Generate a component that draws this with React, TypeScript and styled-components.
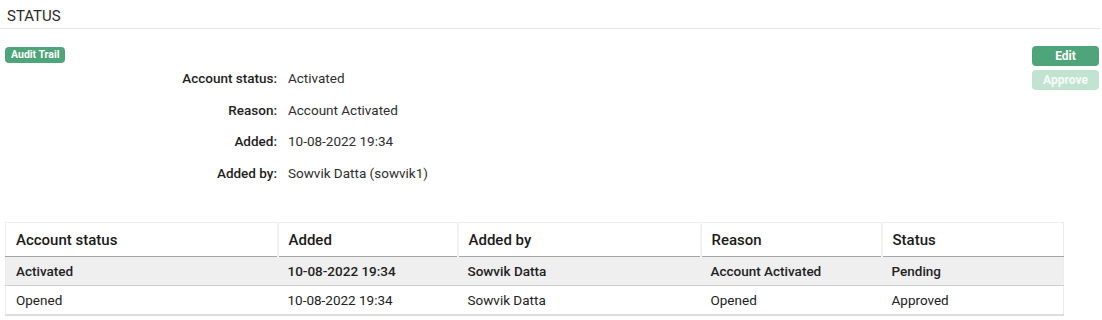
import React from "react";
import styled, { createGlobalStyle } from "styled-components";

interface Entry {
  accountStatus: string;
  added: string;
  addedBy: string;
  reason: string;
  status: string;
  pending?: boolean;
}

const entries: Entry[] = [
  {
    accountStatus: "Activated",
    added: "10-08-2022 19:34",
    addedBy: "Sowvik Datta",
    reason: "Account Activated",
    status: "Pending",
    pending: true,
  },
  {
    accountStatus: "Opened",
    added: "10-08-2022 19:34",
    addedBy: "Sowvik Datta",
    reason: "Opened",
    status: "Approved",
  },
];

const details = [
  { label: "Account status:", value: "Activated" },
  { label: "Reason:", value: "Account Activated" },
  { label: "Added:", value: "10-08-2022 19:34" },
  { label: "Added by:", value: "Sowvik Datta (sowvik1)" },
];

const App: React.FC = () => {
  return (
    <Page>
      <GlobalStyle />
      <Heading>Status</Heading>
      <Body>
        <Main>
          <Badge>Audit Trail</Badge>
          <Details>
            {details.map((d) => (
              <React.Fragment key={d.label}>
                <Label>{d.label}</Label>
                <Value>{d.value}</Value>
              </React.Fragment>
            ))}
          </Details>
        </Main>
        <Actions>
          <ActionButton>Edit</ActionButton>
          <ActionButton disabled>Approve</ActionButton>
        </Actions>
      </Body>
      <Table>
        <colgroup>
          <col style={{ width: 272 }} />
          <col style={{ width: 180 }} />
          <col style={{ width: 243 }} />
          <col style={{ width: 181 }} />
          <col style={{ width: 182 }} />
        </colgroup>
        <thead>
          <tr>
            <Th>Account status</Th>
            <Th>Added</Th>
            <Th>Added by</Th>
            <Th>Reason</Th>
            <Th>Status</Th>
          </tr>
        </thead>
        <tbody>
          {entries.map((e, i) => (
            <Row key={i} $pending={e.pending}>
              <Td>{e.accountStatus}</Td>
              <Td>{e.added}</Td>
              <Td>{e.addedBy}</Td>
              <Td>{e.reason}</Td>
              <Td>{e.status}</Td>
            </Row>
          ))}
        </tbody>
      </Table>
    </Page>
  );
};

const GlobalStyle = createGlobalStyle`
  body {
    margin: 0;
    background: #fff;
    font-family: "Roboto", "Liberation Sans", sans-serif;
    color: #222;
  }
`;

const Page = styled.div`
  width: 1102px;
  height: 320px;
  overflow: hidden;
`;

const Heading = styled.h2`
  margin: 0 2px 0 0;
  padding: 7px 0 3px 7px;
  font: 400 15px/18px "Roboto", sans-serif;
  text-transform: uppercase;
  color: #2a2a2a;
  border-bottom: 1px solid #e4e4e4;
`;

const Body = styled.div`
  display: flex;
  justify-content: space-between;
  padding: 16px 3px 0 5px;
  height: 177px;
`;

const Main = styled.div`
  display: flex;
  flex-direction: column;
`;

const Badge = styled.span`
  align-self: flex-start;
  margin-top: 2px;
  background: #4ea57a;
  color: #fff;
  font: 700 10.5px/16px "Roboto", sans-serif;
  padding: 0 6px;
  border-radius: 4px;
`;

const Details = styled.div`
  display: grid;
  grid-template-columns: 272px auto;
  column-gap: 11px;
  row-gap: 13.5px;
  margin-top: 6px;
`;

const Label = styled.span`
  text-align: right;
  font: 500 13.5px/18px "Roboto", sans-serif;
  color: #1e1e1e;
`;

const Value = styled.span`
  font: 400 13.5px/18px "Roboto", sans-serif;
  color: #2e2e2e;
`;

const Actions = styled.div`
  display: flex;
  flex-direction: column;
  gap: 4px;
  padding-top: 1px;
`;

const ActionButton = styled.button`
  width: 67px;
  height: 20px;
  border: none;
  border-radius: 4px;
  padding: 0;
  background: #4ea57a;
  color: #fff;
  font: 700 12px/20px "Roboto", sans-serif;
  &:disabled {
    background: #c3e3d2;
    color: #f4fbf7;
  }
`;

const Table = styled.table`
  margin-left: 5px;
  width: 1058px;
  border-collapse: collapse;
  table-layout: fixed;
  border: 1px solid #ececec;
  border-bottom: 2px solid #dcdcdc;
`;

const Th = styled.th`
  text-align: left;
  font: 500 15px/18px "Roboto", sans-serif;
  color: #1a1a1a;
  padding: 8px 10px 7px;
  border-right: 2px solid #f2f2f2;
  border-bottom: 1px solid #a4a4a4;
  &:last-child {
    border-right: none;
  }
`;

const Row = styled.tr<{ $pending?: boolean }>`
  background: ${(p) => (p.$pending ? "#efefef" : "#fff")};
  font-weight: ${(p) => (p.$pending ? 500 : 400)};
  & + & {
    border-top: 1px solid #cfcfcf;
  }
`;

const Td = styled.td`
  font-size: 13.5px;
  line-height: 18px;
  padding: 5px 10px 5px;
  color: #222;
`;

export default App;
